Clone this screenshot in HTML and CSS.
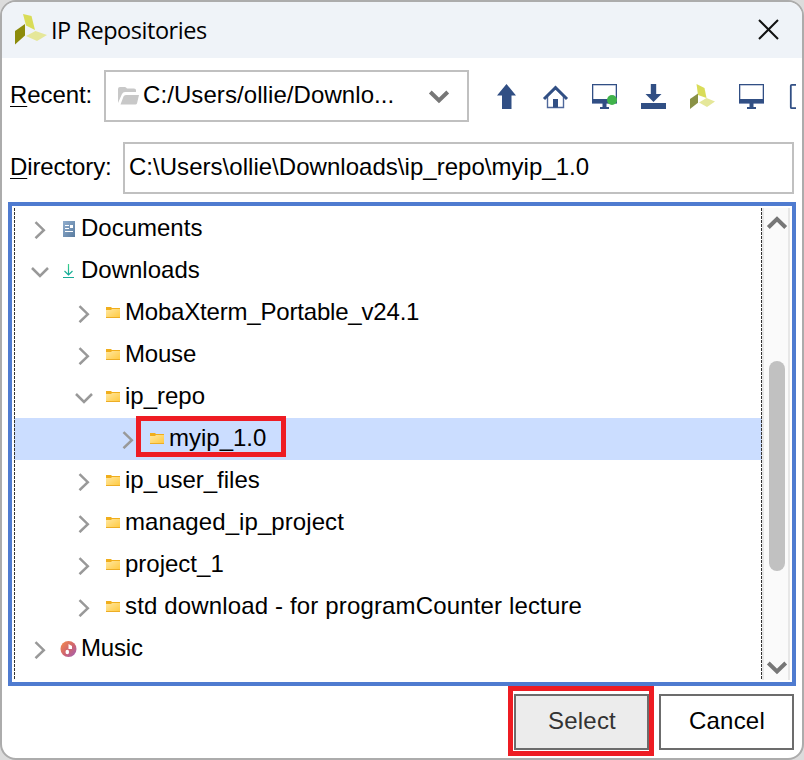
FILE: index.html
```html
<!DOCTYPE html>
<html lang="en">
<head>
<meta charset="utf-8">
<title>IP Repositories</title>
<link rel="stylesheet" href="styles.css">
</head>
<body>
<svg class="defs" width="0" height="0">
  <defs>
    <linearGradient id="gold" x1="0" y1="0" x2="1" y2="1"><stop offset="0" stop-color="#ffe7a0"/><stop offset="1" stop-color="#ffc93e"/></linearGradient>
    <linearGradient id="steel" x1="0" y1="0" x2="1" y2="1"><stop offset="0" stop-color="#91aece"/><stop offset="1" stop-color="#597b9f"/></linearGradient>
    <linearGradient id="disc" x1="0" y1="0" x2="1" y2="1"><stop offset="0.1" stop-color="#ef8651"/><stop offset="0.55" stop-color="#ce6370"/><stop offset="1" stop-color="#9d61bb"/></linearGradient>
    <linearGradient id="mint" x1="0" y1="0" x2="0" y2="1"><stop offset="0" stop-color="#3bd38a"/><stop offset="1" stop-color="#10a69a"/></linearGradient>
  </defs>
  <symbol id="right" viewBox="0 0 18 18"><path d="M4.500 1.200 12.800 9.200 4.500 17.200" fill="none" stroke="#999" stroke-width="2.500"/></symbol>
  <symbol id="down" viewBox="0 0 18 18"><path d="M1 5 9 13 17 5" fill="none" stroke="#999" stroke-width="2.500"/></symbol>
  <symbol id="folder" viewBox="0 0 14 12"><path d="M0 0h5l1 1h8v3H0z" fill="#f0ae1c"/><path d="M0 3h5l1-1h8v9H0z" fill="url(#gold)"/><path d="M0 10.500h14" stroke="#edad25"/></symbol>
  <symbol id="monitor" viewBox="0 0 25 25"><path d="M0 0h25v20H0z" fill="#8495b9"/><path d="M0 0h25v1H0zM0 0h1v19H0zM24 0h1v19h-1zM0 15h25v4H0z" fill="#314f84"/><path d="M1.500 1.500h22V15h-22z" fill="#fff"/><path d="M10.500 19h4v4h2.500v2H8v-2h2.500z" fill="#314f84"/></symbol>
</svg>
<main class="dialog">
  <header class="titlebar">
    <svg class="logo" width="32" height="32" viewBox="0 0 32 32"><path d="M8 1 16.500 3 20 17 11 12.500z" fill="#d9dc58"/><path d="M0 18 10 11v11.500L0 31.500z" fill="#8c8b0b"/><path d="M11 23 20.500 18 32 22 22 28z" fill="#e5e799"/></svg>
    <h1>IP Repositories</h1>
    <svg class="close" width="21" height="21" viewBox="0 0 21 21"><path d="M1 1 20 20M20 1 1 20" stroke="#111" stroke-width="2"/></svg>
  </header>
  <section class="recent">
    <span class="label"><u>R</u>ecent:</span>
    <div class="combo">
      <svg width="21" height="18" viewBox="0 0 21 18"><path d="M0 16V2Q0 0 2 0h5q1 0 2 1.500h7q2 0 2 1.500v2H7Q5 5 4 7z" fill="#c8c8c8"/><path d="M5.500 9.500Q6 8 8 8h13l-2 8.500q-.5 1-1.500 1H2.500z" fill="#c8c8c8"/><path d="M1.500 15.500 4.500 8.200Q5.500 6.500 8 6.500h11" fill="none" stroke="#fff"/></svg>
      <span class="path">C:/Users/ollie/Downlo...</span>
      <svg class="drop" width="20" height="14" viewBox="0 0 20 14"><path d="M1.300 2 10 10.500 18.700 2" fill="none" stroke="#777" stroke-width="4"/></svg>
    </div>
    <nav class="tools">
      <svg viewBox="0 0 25 25"><path d="M12.500 0 22 11.500h-4.500V25h-9.500V11.500H3z" fill="#314f84"/></svg>
      <svg viewBox="0 0 25 25"><path d="M4.500 12v11.500h16V12" fill="none" stroke="#4f689b" stroke-width="1.400"/><path d="M1 15 12.500 3.700 24 15" fill="none" stroke="#314f84" stroke-width="3"/><path d="M10 15h5v8.500h-5z" fill="#314f84"/></svg>
      <svg viewBox="0 0 25 25"><use href="#monitor"/><circle cx="20" cy="16" r="5" fill="#40b34b"/></svg>
      <svg viewBox="0 0 25 25"><path d="M0 19h25v6H0zM9.800 0h5.400v10h5.300l-8 8-8-8h5.300z" fill="#314f84"/></svg>
      <svg viewBox="0 0 25 25"><path d="M6.500 0 14.500 4 16.500 14 8 11z" fill="#d9dc58"/><path d="M0 15 8 9.500v9.200L0 25z" fill="#899145"/><path d="M9 18.500 16.500 14 25 17.500 17 23z" fill="#e5e799"/></svg>
      <svg viewBox="0 0 25 25"><use href="#monitor"/></svg>
      <svg viewBox="0 0 25 25"><rect x="2.800" y=".8" width="20" height="23.400" rx="1" fill="none" stroke="#314f84" stroke-width="1.800"/></svg>
    </nav>
  </section>
  <section class="directory">
    <span class="label"><u>D</u>irectory:</span>
    <div class="field">C:\Users\ollie\Downloads\ip_repo\myip_1.0</div>
  </section>
  <section class="browser">
    <ul class="tree">
      <li><svg class="arrow"><use href="#right"/></svg><svg class="icon" viewBox="0 0 16 18"><path d="M3 1h12v16H3z" fill="url(#steel)"/><path d="M5 5.500h4M5 8.500h4M5 11.500h8" stroke="#fff"/><path d="M10 5h3v3h-3z" fill="#fff"/></svg><span>Documents</span></li>
      <li><svg class="arrow"><use href="#down"/></svg><svg class="icon" viewBox="0 0 16 18"><path d="M8.500 2v11M4.500 9l4 4 4-4" fill="none" stroke="url(#mint)" stroke-width="1.200"/><path d="M3 15.500h11" stroke="#18aa96"/></svg><span>Downloads</span></li>
      <li class="level2"><svg class="arrow"><use href="#right"/></svg><svg class="folder"><use href="#folder"/></svg><span class="tight">MobaXterm_Portable_v24.1</span></li>
      <li class="level2"><svg class="arrow"><use href="#right"/></svg><svg class="folder"><use href="#folder"/></svg><span class="tight">Mouse</span></li>
      <li class="level2"><svg class="arrow"><use href="#down"/></svg><svg class="folder"><use href="#folder"/></svg><span>ip_repo</span></li>
      <li class="level3 selected"><svg class="arrow"><use href="#right"/></svg><svg class="folder"><use href="#folder"/></svg><span>myip_1.0</span><i class="marker"></i></li>
      <li class="level2"><svg class="arrow"><use href="#right"/></svg><svg class="folder"><use href="#folder"/></svg><span>ip_user_files</span></li>
      <li class="level2"><svg class="arrow"><use href="#right"/></svg><svg class="folder"><use href="#folder"/></svg><span class="wide">managed_ip_project</span></li>
      <li class="level2"><svg class="arrow"><use href="#right"/></svg><svg class="folder"><use href="#folder"/></svg><span>project_1</span></li>
      <li class="level2"><svg class="arrow"><use href="#right"/></svg><svg class="folder"><use href="#folder"/></svg><span class="loose">std download - for programCounter lecture</span></li>
      <li><svg class="arrow"><use href="#right"/></svg><svg class="icon" viewBox="0 0 16 18"><circle cx="8.500" cy="9" r="8" fill="url(#disc)"/><path d="M8.500 4 12 6v3H8.500z" fill="#fff"/><ellipse cx="7.300" cy="12" rx="1.800" ry="2.200" fill="#fff"/></svg><span class="tight">Music</span></li>
    </ul>
    <div class="scrollbar">
      <svg width="20" height="14" viewBox="0 0 20 14"><path d="M1.300 11.500 10 3 18.700 11.500" fill="none" stroke="#777" stroke-width="4"/></svg>
      <div class="thumb"></div>
      <svg width="20" height="14" viewBox="0 0 20 14"><path d="M1.300 2 10 10.500 18.700 2" fill="none" stroke="#777" stroke-width="4"/></svg>
    </div>
  </section>
  <footer class="actions">
    <div class="highlight"><button class="primary">Select</button></div>
    <button>Cancel</button>
  </footer>
</main>
</body>
</html>
```
FILE: styles.css
```css
* { box-sizing: border-box; }
body { margin: 0; width: 804px; height: 760px; overflow: hidden; background: #dcdcdc; font: 24px/28px "Liberation Sans", Arial, sans-serif; color: #000; }
svg { display: block; flex: none; overflow: visible; }
.defs { position: absolute; }
.dialog { width: 804px; height: 760px; border: 2px solid #acacac; border-radius: 16px; background: #fff; overflow: hidden; display: flex; flex-direction: column; }
.titlebar { height: 56px; flex: none; display: flex; align-items: center; background: #eff3f8; padding: 0 23px 0 13px; }
.titlebar h1 { margin: 0 0 0 4px; font: 400 23.5px/32px "Open Sans", "Noto Sans", sans-serif; letter-spacing: -0.46px; }
.logo { margin-top: -2px; }
.close { margin-left: auto; margin-top: -1px; }
.recent { display: flex; align-items: center; height: 52px; margin: 12px 6px 0 8px; overflow: hidden; flex: none; }
.label { flex: none; white-space: nowrap; letter-spacing: -0.1px; }
.recent .label { width: 94px; margin-top: -2px; }
.label u { text-decoration-thickness: 1px; text-underline-offset: 3px; }
.combo { width: 365px; height: 52px; flex: none; border: 2px solid #c0c0c0; display: flex; align-items: center; padding: 0 18px 0 12px; }
.path { margin: -3px 0 0 4px; white-space: nowrap; letter-spacing: 0.08px; }
.drop { margin-left: auto; margin-top: 2px; }
.tools { display: flex; gap: 24px; margin-left: 25px; }
.tools svg { width: 25px; height: 25px; }
.directory { display: flex; align-items: center; height: 52px; margin: 20px 8px 0; flex: none; }
.directory .label { width: 113px; margin-top: -2px; }
.field { flex: 1; height: 52px; border: 2px solid #c0c0c0; padding: 9px 4px; white-space: nowrap; letter-spacing: 0.03px; }
.browser { height: 484px; flex: none; margin: 8px 6px 0; border: 4px solid #4f7bd0; padding: 2px; display: flex; background: #fff; }
.tree { position: relative; list-style: none; margin: 0; padding: 0; width: 748px; flex: none; height: 472px; }
.tree::before, .tree::after { content: ""; position: absolute; z-index: 1; top: 0; bottom: 0; width: 1px; background: repeating-linear-gradient(#333 0 3px, transparent 3px 4px); }
.tree::before { left: 0; }
.tree::after { right: 0; }
.tree li { position: relative; display: flex; align-items: center; height: 42px; padding-left: 17px; white-space: nowrap; }
.tree .level2 { padding-left: 61px; }
.tree .level3 { padding-left: 105px; }
.tree .selected { background: #cbddff; }
.arrow { width: 18px; height: 18px; margin-top: 1px; }
.icon { width: 16px; height: 18px; margin-left: 11px; }
.folder { width: 14px; height: 12px; margin: 0 0 0 13px; }
.tree span { margin: -2px 0 0 5px; letter-spacing: 0; }
.tree .tight { letter-spacing: -0.19px; }
.tree .wide { letter-spacing: 0.08px; }
.tree .loose { letter-spacing: 0.15px; }
.marker { position: absolute; left: 122px; top: -2px; width: 150px; height: 41px; border: 5px solid #ee1c23; }
.scrollbar { width: 28px; height: 472px; border: solid #e7e7e7; border-width: 0 2px; background: #fafafa; display: flex; flex-direction: column; align-items: flex-start; padding: 8px 0 5px 3px; }
.thumb { width: 16px; height: 210px; border-radius: 8px; background: #c1c1c1; margin: 131px 0 auto 2px; }
.actions { display: flex; gap: 5px; padding-left: 506px; height: 70px; }
.highlight { width: 146px; height: 70px; border: 5px solid #ee1c23; padding: 3px 0 0 1px; }
button { width: 135px; height: 56px; border: 2px solid #6c6c6c; background: #fff; color: #000; font: inherit; padding: 0 0 3px 1px; margin: 8px 0 0; display: block; letter-spacing: 0.2px; }
.highlight .primary { margin: 0; background: #ececec; color: #333; }
```
